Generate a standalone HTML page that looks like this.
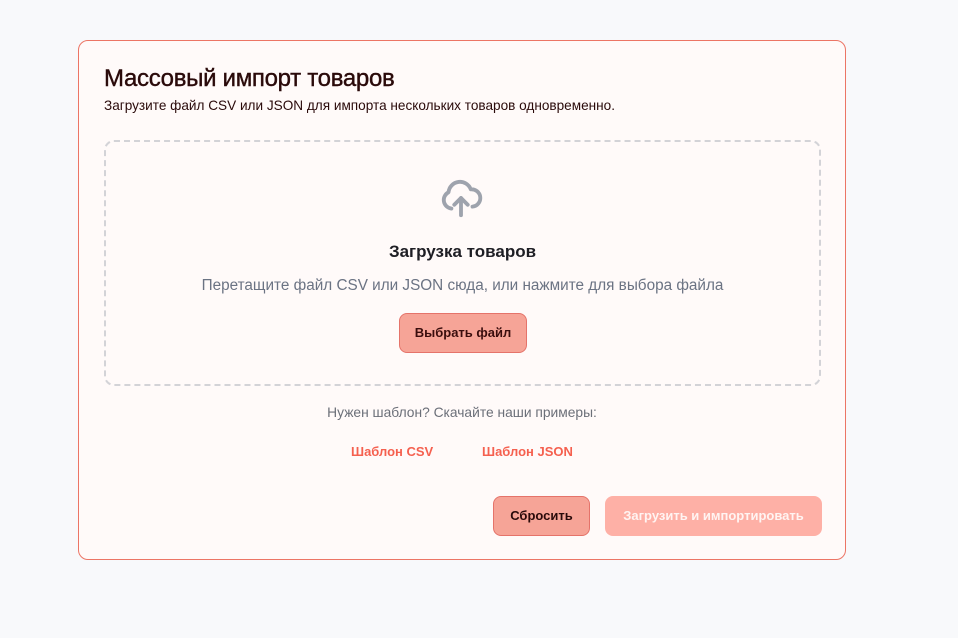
<!DOCTYPE html>
<html><head><meta charset="utf-8"><style>
*{box-sizing:border-box;margin:0;padding:0}
body{width:958px;height:638px;background:#f8f9fb;font-family:"Liberation Sans",sans-serif;position:relative;overflow:hidden}
.card{position:absolute;left:78px;top:40px;width:768px;height:520px;background:#fffaf9;border:1px solid #ec7565;border-radius:10px}
h1{position:absolute;left:25px;top:24px;font-size:24px;font-weight:normal;color:#2a0a0a;letter-spacing:-0.3px;-webkit-text-stroke:0.4px #2a0a0a}
.sub{position:absolute;left:25px;top:57px;font-size:13.6px;color:#2a0a0a}
.drop{position:absolute;left:25px;top:99px;width:717px;height:246px;border:2px dashed #d3d3d7;border-radius:10px}
.drop svg{position:absolute;left:331px;top:33px}
.t{position:absolute;left:0;width:100%;text-align:center}
.btn{position:absolute;border-radius:8px;font-size:13px;font-weight:bold;text-align:center}
</style></head><body>
<div class="card">
<h1>Массовый импорт товаров</h1>
<div class="sub">Загрузите файл CSV или JSON для импорта нескольких товаров одновременно.</div>
<div class="drop">
<svg width="48" height="46" viewBox="0 0 24 24" fill="none" stroke="#9ea3ad" stroke-width="2" stroke-linecap="round" stroke-linejoin="round"><path d="M7 17.5A4.5 4.5 0 0 1 5.5 9a6 6 0 0 1 11.6-1.5A4 4 0 0 1 18 16.5"/><path d="M12 21v-9"/><path d="M8.5 15.5 12 12l3.5 3.5"/></svg>
<div class="t" style="top:100px;font-size:17px;font-weight:bold;color:#1e1e24">Загрузка товаров</div>
<div class="t" style="top:135px;font-size:15.3px;color:#6b7383">Перетащите файл CSV или JSON сюда, или нажмите для выбора файла</div>
<div class="btn" style="left:293px;top:171px;width:128px;height:40px;line-height:38px;background:#f6a497;border:1px solid #e5736a;color:#3a0d0d">Выбрать файл</div>
</div>
<div class="t" style="top:364px;font-size:13.8px;color:#6b6f78">Нужен шаблон? Скачайте наши примеры:</div>
<div style="position:absolute;left:272px;top:403px;font-size:13px;font-weight:bold;color:#f5604f">Шаблон CSV</div>
<div style="position:absolute;left:403px;top:403px;font-size:13px;font-weight:bold;color:#f5604f">Шаблон JSON</div>
<div class="btn" style="left:414px;top:455px;width:97px;height:40px;line-height:38px;background:#f6a497;border:1px solid #e5736a;color:#2a0a0a">Сбросить</div>
<div class="btn" style="left:526px;top:455px;width:217px;height:40px;line-height:40px;background:#feb0a6;color:#fff4f2">Загрузить и импортировать</div>
</div>
</body></html>
